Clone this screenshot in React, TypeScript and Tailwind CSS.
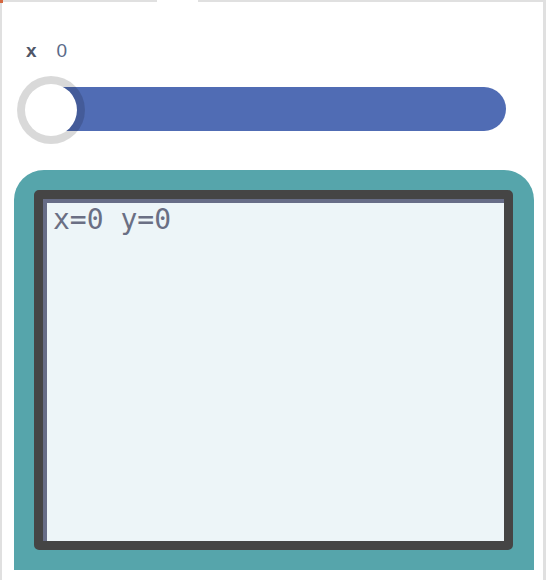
import React from 'react'

export default function App() {
  return (
    <div className="w-[546px] h-[580px] overflow-hidden bg-white">
      <div className="relative h-full border-l-2 border-r-[3px] border-[#e0e0e0] flex flex-col">
        {/* top edge with tab gap */}
        <div className="flex h-[2px] shrink-0">
          <div className="w-[155px] bg-[#e0e0e0]" />
          <div className="w-[41px] bg-white" />
          <div className="flex-1 bg-[#e0e0e0]" />
        </div>
        <div className="absolute -left-[2px] top-0 w-[3px] h-[3px] bg-[#d5673f]" />

        {/* label */}
        <div className="flex items-baseline gap-[20px] pl-[24px] pt-[39px] h-[74px] font-['Liberation_Sans',Arial,sans-serif] text-[19px] leading-none">
          <span className="font-bold text-[#4f5668]">x</span>
          <span className="text-[#5a6a88]">0</span>
        </div>

        {/* slider */}
        <div className="relative ml-[15px] w-[490px] h-[68px] flex items-center">
          <div className="ml-[9px] w-[480px] h-[44px] -mt-[3px] rounded-full bg-[#506cb4]" />
          <div className="absolute left-0 top-0 w-[68px] h-[68px] rounded-full bg-white border-[8px] border-black/15 bg-clip-padding" />
        </div>

        {/* canvas */}
        <div className="mt-[26px] ml-[12px] w-[520px] h-[400px] rounded-t-[30px] bg-[#56a5ab] p-[20px] pr-[21px]">
          <div className="h-full rounded-[5px] border-[9px] border-[#454545] bg-[#edf5f8] shadow-[inset_4px_4px_0_#676d87] pl-[10px] pt-[7px]">
            <div className="font-['DejaVu_Sans_Mono',monospace] text-[28px] leading-none text-[#6a6f84] whitespace-pre">
              x=0 y=0
            </div>
          </div>
        </div>
      </div>
    </div>
  )
}
